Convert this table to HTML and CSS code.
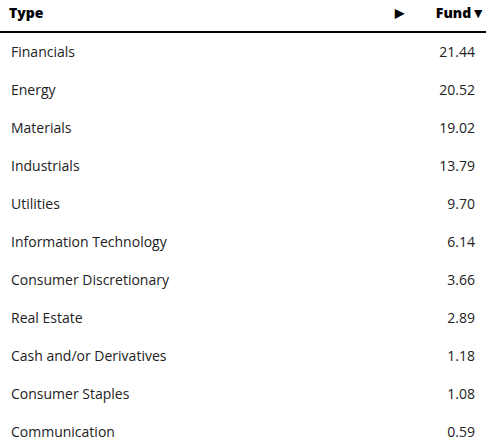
FILE: index.html
```html
<!DOCTYPE html>
<html lang="en">
<head>
  <meta charset="UTF-8">
  <title>Sector Exposure</title>
  <link rel="stylesheet" href="styles.css">
</head>
<body>

  <table class="holdings">
    <thead>
      <tr>
        <th class="col-type">Type</th>
        <th class="col-arrow">&#9654;</th>
        <th class="col-fund">Fund&#9660;</th>
      </tr>
    </thead>
    <tbody>
      <tr><td>Financials</td><td></td><td class="num">21.44</td></tr>
      <tr><td>Energy</td><td></td><td class="num">20.52</td></tr>
      <tr><td>Materials</td><td></td><td class="num">19.02</td></tr>
      <tr><td>Industrials</td><td></td><td class="num">13.79</td></tr>
      <tr><td>Utilities</td><td></td><td class="num">9.70</td></tr>
      <tr><td>Information Technology</td><td></td><td class="num">6.14</td></tr>
      <tr><td>Consumer Discretionary</td><td></td><td class="num">3.66</td></tr>
      <tr><td>Real Estate</td><td></td><td class="num">2.89</td></tr>
      <tr><td>Cash and/or Derivatives</td><td></td><td class="num">1.18</td></tr>
      <tr><td>Consumer Staples</td><td></td><td class="num">1.08</td></tr>
      <tr><td>Communication</td><td></td><td class="num">0.59</td></tr>
    </tbody>
  </table>

</body>
</html>
```

FILE: styles.css
```css
body {
  margin: 0;
  font-family: "Open Sans", Arial, sans-serif;
  color: #222;
  background: #fff;
}

.holdings {
  width: 486px;
  border-collapse: collapse;
}

.holdings th {
  height: 25px;
  padding: 0 0 6px 0;
  font-size: 14px;
  font-weight: 800;
  color: #000;
  border-bottom: 2px solid #000;
  vertical-align: middle;
  white-space: nowrap;
}

.col-type {
  text-align: left;
  padding-left: 9px !important;
}

.col-arrow {
  width: 30px;
  font-size: 12px !important;
  text-align: left;
}

.col-fund {
  width: 60px;
  text-align: right;
  padding-right: 1px !important;
}

.holdings td {
  height: 36px;
  padding: 0 0 2px 11px;
  font-size: 14px;
  vertical-align: middle;
  white-space: nowrap;
}

.holdings td.num {
  text-align: right;
  padding: 0 11px 2px 0;
}
```
